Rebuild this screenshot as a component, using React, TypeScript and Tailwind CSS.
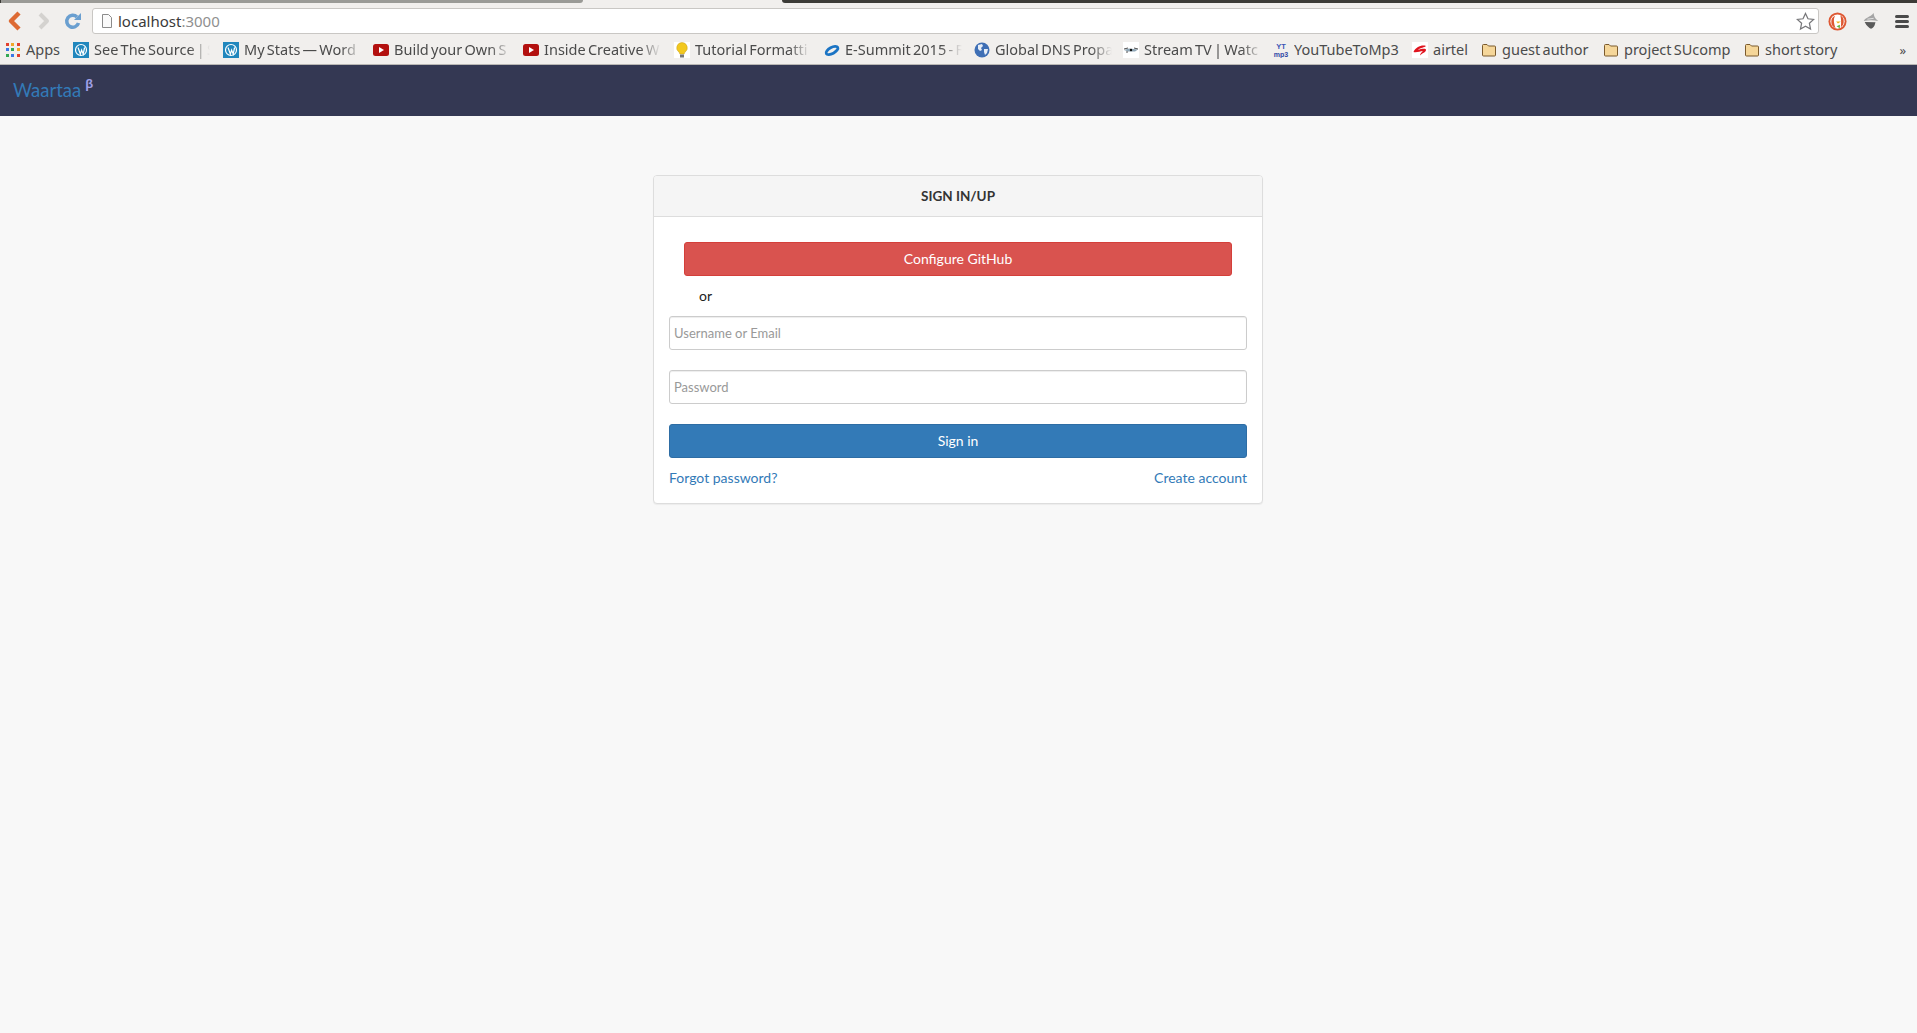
import type { ReactNode } from "react";

type Bookmark = { label: string; width: string; item: string; icon: ReactNode; fade?: boolean };

const uiFont = "font-['Lato','Noto_Sans',sans-serif]";

function WpIcon() {
  return (
    <svg viewBox="0 0 16 16" className="size-4 shrink-0">
      <rect width="16" height="16" fill="#2187bd" />
      <circle cx="8" cy="8" r="5.500" fill="none" stroke="#fff" strokeWidth="1.200" />
      <path d="M5 5.500l2.400 6.500L8.600 8l1.600 4 1.400-6.500" fill="none" stroke="#fff" strokeWidth="1.200" />
    </svg>
  );
}

function YtIcon() {
  return (
    <svg viewBox="0 0 16 16" className="size-4 shrink-0">
      <rect y="2" width="16" height="12" rx="2.500" fill="#b3100f" />
      <path d="M6 5l5 3-5 3z" fill="#fff" />
    </svg>
  );
}

function BulbIcon() {
  return (
    <svg viewBox="0 0 16 16" className="size-4 shrink-0">
      <rect width="16" height="16" fill="#fff" />
      <path d="M8 .5a5.300 5.300 0 0 0-3.200 9.500c.7.600 1 1.300 1 2h4.400c0-.7.300-1.400 1-2A5.300 5.300 0 0 0 8 .5z" fill="#f2c81e" stroke="#c9a020" strokeWidth="0.500" />
      <rect x="6" y="12.500" width="4" height="3" fill="#777" />
    </svg>
  );
}

function SummitIcon() {
  return (
    <svg viewBox="0 0 16 16" className="size-4 shrink-0">
      <ellipse cx="8" cy="8.500" rx="6.500" ry="3" transform="rotate(-28 8 8.500)" fill="none" stroke="#1b74c4" strokeWidth="2.800" />
    </svg>
  );
}

function GlobeIcon() {
  return (
    <svg viewBox="0 0 16 16" className="size-4 shrink-0">
      <circle cx="8" cy="8" r="7.500" fill="#3f6fb5" />
      <path d="M4 3l4-1 1 2-2 2 1 2-2 1-2-2zM10 7l4 0-1 4-2 2-1-3z" fill="#e6edf7" />
    </svg>
  );
}

function StreamIcon() {
  return (
    <svg viewBox="0 0 16 16" className="size-4 shrink-0">
      <rect width="16" height="16" fill="#fff" />
      <path d="M1 8l5-1.500 9 1-3 2H5z" fill="#8fa6b5" />
      <circle cx="8" cy="8" r="1.200" fill="#111" />
      <path d="M1 7l4-1M11 6l4 1M3 10h2" stroke="#222" strokeWidth="0.800" />
    </svg>
  );
}

function Mp3Icon() {
  return (
    <svg viewBox="0 0 16 16" className="size-4 shrink-0">
      <text x="8" y="7" textAnchor="middle" fontSize="7.500" fontWeight="700" fontFamily="Liberation Sans, sans-serif" fill="#3c56b5">
        YT
      </text>
      <text x="8" y="15" textAnchor="middle" fontSize="7" fontWeight="700" fontFamily="Liberation Sans, sans-serif" fill="#2f47a5">
        mp3
      </text>
    </svg>
  );
}

function AirtelIcon() {
  return (
    <svg viewBox="0 0 16 16" className="size-4 shrink-0">
      <rect width="16" height="16" fill="#fff" />
      <path d="M1.500 10c2-4.500 8-7.500 12.500-6-1.500 2-5.500 1-8 4 3-1 8-2 8 0 0 2.500-4 3-6 5.500 0-2 2-3.500 3-4.500-3 0-6.500 2-9.500 1z" fill="#e0141e" />
    </svg>
  );
}

function FolderIcon() {
  return (
    <svg viewBox="0 0 16 16" className="size-4 shrink-0">
      <path d="M1.500 3.500a1 1 0 0 1 1-1h3.500l1.500 1.500h6a1 1 0 0 1 1 1v8a1 1 0 0 1-1 1h-11a1 1 0 0 1-1-1z" fill="#f5d699" stroke="#7b5a2c" />
    </svg>
  );
}

const bookmarks: Bookmark[] = [
  { label: "See The Source | S", width: "w-[116px]", item: "w-[150px]", icon: <WpIcon />, fade: true },
  { label: "My Stats — Word", width: "w-[118px]", item: "w-[150px]", icon: <WpIcon />, fade: true },
  { label: "Build your Own S", width: "w-[117px]", item: "w-[150px]", icon: <YtIcon />, fade: true },
  { label: "Inside Creative W", width: "w-[117px]", item: "w-[151px]", icon: <YtIcon />, fade: true },
  { label: "Tutorial Formatti", width: "w-[115px]", item: "w-[150px]", icon: <BulbIcon />, fade: true },
  { label: "E-Summit 2015 - F", width: "w-[117px]", item: "w-[150px]", icon: <SummitIcon />, fade: true },
  { label: "Global DNS Propa", width: "w-[117px]", item: "w-[149px]", icon: <GlobeIcon />, fade: true },
  { label: "Stream TV | Watc", width: "w-[119px]", item: "w-[150px]", icon: <StreamIcon />, fade: true },
  { label: "YouTubeToMp3", width: "w-[107px]", item: "w-[139px]", icon: <Mp3Icon /> },
  { label: "airtel", width: "w-[37px]", item: "w-[69px]", icon: <AirtelIcon /> },
  { label: "guest author", width: "w-[90px]", item: "w-[122px]", icon: <FolderIcon /> },
  { label: "project SUcomp", width: "w-[110px]", item: "w-[141px]", icon: <FolderIcon /> },
  { label: "short story", width: "w-[78px]", item: "w-[110px]", icon: <FolderIcon /> },
];

function AppsIcon() {
  const colors = ["#e2402f", "#f0a828", "#e2402f", "#3b78e7", "#34a853", "#f0a828", "#34a853", "#3b78e7", "#e2402f"];
  return (
    <div className="grid size-[14px] shrink-0 grid-cols-3 gap-[2px]">
      {colors.map((color, index) => (
        <span key={index} className="size-[3px]" style={{ backgroundColor: color }} />
      ))}
    </div>
  );
}

function DuckIcon() {
  return (
    <svg viewBox="0 0 20 20" className="ml-[9px] size-[19px]">
      <circle cx="10" cy="10" r="9.500" fill="#de5833" />
      <circle cx="10" cy="10" r="7.500" fill="#fff" />
      <path d="M3.500 10a6.500 6.500 0 0 1 4-6c-2 3-1.500 8 .5 13a7 7 0 0 1-4.500-7z" fill="#de5833" />
      <path d="M13 3.500a7 7 0 0 1 3.500 6.500 7 7 0 0 1-3 6c.5-4 .5-8-.5-12.500z" fill="#de5833" />
      <path d="M8.500 10h5l-3 2z" fill="#f2b418" />
      <path d="M9 15l3.500-1.500V17z" fill="#62b33f" />
    </svg>
  );
}

function SharkIcon() {
  return (
    <svg viewBox="0 0 20 20" className="ml-[15px] size-[18px]">
      <path d="M2 10c1-4 7-4 11-9 0 3 1 6 5 9-5-1-11-1-16 0z" fill="#a4a4a4" />
      <path d="M3 11l12 .5c-1 3-1 6-5 7-2-1-5-3-7-7.500z" fill="#5a5a5a" />
      <path d="M6 8l7-1" stroke="#e8e8e8" />
    </svg>
  );
}

function BrowserChrome() {
  return (
    <header className="bg-[#f1efed]">
      <div className="flex h-[3px]">
        <div className="w-[583px] rounded-br-[3px] border-l border-[#3c3b37] bg-[#9a9a96]" />
        <div className="w-[199px]" />
        <div className="flex-1 rounded-bl-[3px] bg-[#3c3b37]" />
      </div>
      <div className="flex h-[36px] items-center pl-[7px] pr-[8px]">
        <svg viewBox="0 0 16 20" className="h-[20px] w-[16px]">
          <path d="M12 2L4 10l8 8" fill="none" stroke="#dd6a33" strokeWidth="4.500" strokeLinejoin="round" />
        </svg>
        <svg viewBox="0 0 16 20" className="ml-[13px] h-[20px] w-[16px]">
          <path d="M4 3l7 7-7 7" fill="none" stroke="#d4d2cf" strokeWidth="4" strokeLinejoin="round" />
        </svg>
        <svg viewBox="0 0 18 18" className="ml-[12px] size-[18px]">
          <path d="M14.500 11a6 6 0 1 1-1.500-6" fill="none" stroke="#6a9fd0" strokeWidth="3.500" />
          <path d="M17 1v7h-7z" fill="#6a9fd0" />
        </svg>
        <div className="ml-[10px] flex h-[26px] flex-1 items-center rounded-[3px] border border-[#c9c7c4] bg-white pl-[7px] pr-[3px]">
          <svg viewBox="0 0 14 16" className="h-4 w-[14px]">
            <path d="M2.500 1.500h6l3 3v10h-9z" fill="#fafafa" stroke="#8b8b8b" />
          </svg>
          <span className="ml-[4px] font-['Noto_Sans',sans-serif] text-[15px] text-[#3a3a3a]">
            localhost<span className="text-[#8f8f8f]">:3000</span>
          </span>
          <svg viewBox="0 0 20 20" className="ml-auto size-[19px]">
            <path d="M10 1.500l2.600 5.600 6 .7-4.500 4.100 1.200 6L10 15l-5.300 2.900 1.200-6L1.400 7.800l6-.7z" fill="#fff" stroke="#77777a" strokeWidth="1.300" />
          </svg>
        </div>
        <DuckIcon />
        <SharkIcon />
        <div className="ml-[15px] flex w-[14px] flex-col gap-[2px]">
          <span className="h-[3px] rounded-sm bg-[#4a4a4a]" />
          <span className="h-[3px] rounded-sm bg-[#4a4a4a]" />
          <span className="h-[3px] rounded-sm bg-[#4a4a4a]" />
        </div>
      </div>
      <nav className="flex h-[26px] items-center border-b border-[#b9b7b4] pb-[3px] pl-[6px] font-['Noto_Sans',sans-serif] text-[14.500px] text-[#4b4b4b] [word-spacing:-1.500px]">
        <div className="flex w-[67px] items-center gap-[6px]">
          <AppsIcon />
          <span className="mb-[1px]">Apps</span>
        </div>
        {bookmarks.map((bookmark) => (
          <div key={bookmark.label} className={`flex shrink-0 items-center gap-[5px] ${bookmark.item}`}>
            {bookmark.icon}
            <span
              className={`mb-[1px] overflow-hidden whitespace-nowrap ${bookmark.width} ${
                bookmark.fade ? "[mask-image:linear-gradient(to_right,#000_82%,transparent)]" : ""
              }`}
            >
              {bookmark.label}
            </span>
          </div>
        ))}
        <span className="ml-auto pr-[11px] text-[13px] leading-none">»</span>
      </nav>
    </header>
  );
}

function TextField({ placeholder, type }: { placeholder: string; type: string }) {
  return (
    <input
      type={type}
      placeholder={placeholder}
      className="block h-[34px] w-full rounded-[3px] border border-[#ccc] bg-white px-[4px] text-[13px] text-[#555] placeholder:text-[#999] shadow-[inset_0_1px_1px_rgba(0,0,0,0.075)]"
    />
  );
}

export default function App() {
  return (
    <div className={`flex min-h-[1033px] flex-col bg-[#f8f8f8] ${uiFont}`}>
      <BrowserChrome />
      <div className="flex h-[51px] items-center bg-[#343853] pl-[13px]">
        <a className="text-[18.500px] text-[#337ab7]">Waartaa</a>
        <sup className="ml-[4px] text-[13px] font-bold text-[#a0a0e8] font-['Liberation_Sans',sans-serif]">β</sup>
      </div>
      <main className="flex justify-center pr-[1px] pt-[59px]">
        <section className="w-[610px] rounded-[4px] border border-[#ddd] bg-white shadow-[0_1px_1px_rgba(0,0,0,0.05)]">
          <h1 className="flex h-[41px] items-center justify-center rounded-t-[3px] border-b border-[#ddd] bg-[#f5f5f5] pt-[1px] text-[13.500px] font-bold text-[#333]">
            SIGN IN/UP
          </h1>
          <div className="px-[15px] pt-[25px]">
            <div className="px-[15px]">
              <button className="h-[34px] w-full rounded-[3px] border border-[#d43f3a] bg-[#d9534f] pb-[2px] text-[14px] text-white">
                Configure GitHub
              </button>
            </div>
            <p className="mt-[9px] h-[21px] pl-[30px] text-[14px] leading-[21px] text-[#222]">or</p>
            <div className="mt-[10px]">
              <TextField type="text" placeholder="Username or Email" />
            </div>
            <div className="mt-[20px]">
              <TextField type="password" placeholder="Password" />
            </div>
            <button className="mt-[20px] h-[34px] w-full rounded-[3px] border border-[#2e6da4] bg-[#337ab7] pb-[2px] text-[14px] text-white">
              Sign in
            </button>
            <div className="mt-[9px] flex h-[21px] items-center justify-between text-[14px] text-[#337ab7]">
              <a>Forgot password?</a>
              <a>Create account</a>
            </div>
            <div className="h-[15px]" />
          </div>
        </section>
      </main>
    </div>
  );
}
